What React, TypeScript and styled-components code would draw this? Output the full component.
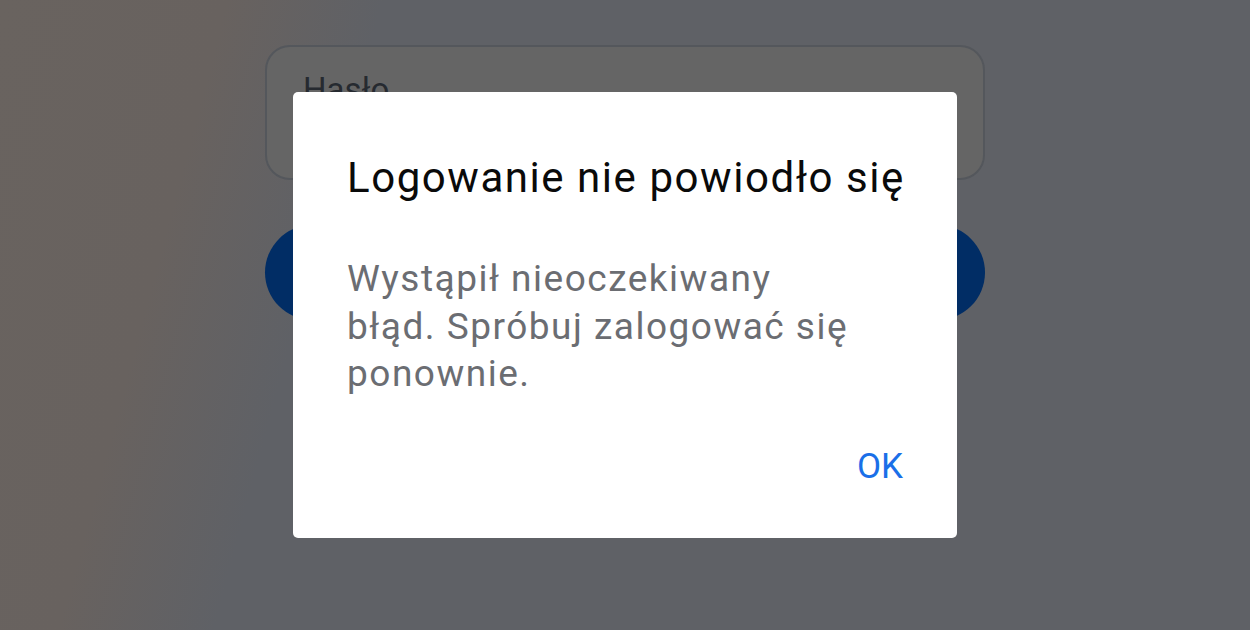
import styled, { createGlobalStyle } from "styled-components";

const GlobalStyle = createGlobalStyle`
    html, body {
        margin: 0;
        padding: 0;
    }
    body {
        font-family: Roboto, "Noto Sans", "Liberation Sans", sans-serif;
    }
`;

export default function App() {
    return (
        <Screen>
            <GlobalStyle />
            <LoginForm>
                <PasswordField>
                    <FieldLabel>Hasło</FieldLabel>
                </PasswordField>
                <SubmitButton />
            </LoginForm>
            <Backdrop>
                <Dialog role="alertdialog">
                    <DialogTitle>Logowanie nie powiodło się</DialogTitle>
                    <DialogMessage>
                        Wystąpił nieoczekiwany błąd. Spróbuj zalogować się ponownie.
                    </DialogMessage>
                    <DialogActions>
                        <TextButton>OK</TextButton>
                    </DialogActions>
                </Dialog>
            </Backdrop>
        </Screen>
    );
}

const Screen = styled.div`
    position: relative;
    width: 1250px;
    height: 630px;
    overflow: hidden;
    background: linear-gradient(105deg, #69635f 0%, #68625f 16%, #5f6166 27%, #5f6166 100%);
`;

const LoginForm = styled.div`
    width: 720px;
    margin: 0 auto;
    padding-top: 45px;
    display: flex;
    flex-direction: column;
    gap: 45px;
`;

const PasswordField = styled.div`
    box-sizing: border-box;
    height: 135px;
    padding: 23px 36px 0;
    border: 2px solid #54575c;
    border-radius: 25px;
    background: #656565;
`;

const FieldLabel = styled.div`
    font-size: 33px;
    line-height: 40px;
    color: #262a30;
`;

const SubmitButton = styled.div`
    height: 95px;
    border-radius: 48px;
    background: #012d65;
`;

const Backdrop = styled.div`
    position: absolute;
    inset: 0;
    display: flex;
    align-items: center;
    justify-content: center;
`;

const Dialog = styled.div`
    box-sizing: border-box;
    width: 664px;
    padding: 61px 54px 48px;
    border-radius: 5px;
    background: #ffffff;
    display: flex;
    flex-direction: column;
`;

const DialogTitle = styled.div`
    font-size: 42px;
    line-height: 50px;
    letter-spacing: 1.55px;
    color: #0a0a0a;
    white-space: nowrap;
`;

const DialogMessage = styled.div`
    max-width: 512px;
    margin-top: 52px;
    font-size: 37px;
    line-height: 47.5px;
    letter-spacing: 1.5px;
    color: #6b6d72;
`;

const DialogActions = styled.div`
    margin-top: 45px;
    display: flex;
    justify-content: flex-end;
`;

const TextButton = styled.div`
    font-size: 35px;
    line-height: 47.5px;
    color: #1a6fe8;
    cursor: pointer;
`;
